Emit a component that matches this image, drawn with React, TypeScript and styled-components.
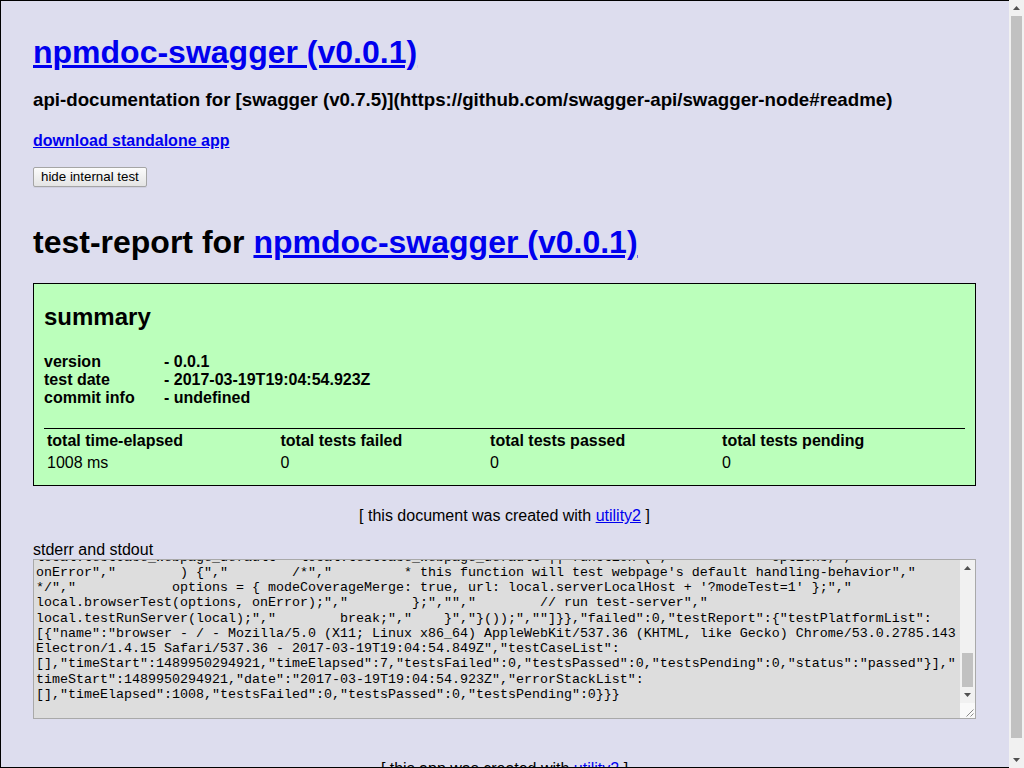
import React, { useEffect, useRef, useState } from 'react';
import styled, { createGlobalStyle } from 'styled-components';

const GlobalStyle = createGlobalStyle`
  html {
    background: #dde;
  }
  body {
    margin: 0;
    background: #dde;
    color: #000;
    font-family: "Liberation Sans", Arial, Helvetica, sans-serif;
  }
  a {
    color: #00e;
  }
`;

// window frame drawn over the page edges
const Frame = styled.div`
  position: fixed;
  top: 0;
  left: 0;
  right: 15px;
  bottom: 0;
  border: 1px solid #000;
  border-right: 0;
  pointer-events: none;
`;

const Page = styled.div`
  padding: 12px 48px 5px 33px;
`;

const Title = styled.h1<{ $top: number; $bottom: number }>`
  font-size: 32px;
  font-weight: bold;
  margin: ${(p) => p.$top}px 0 ${(p) => p.$bottom}px;
`;

const Subtitle = styled.h3`
  font-size: 18.72px;
  margin: 0 0 20.7px;
`;

const DownloadHeading = styled.h4`
  font-size: 16px;
  margin: 0 0 17.6px;
`;

const Toolbar = styled.div`
  display: flex;
`;

const ToggleButton = styled.button`
  box-sizing: border-box;
  height: 20px;
  padding: 0 7px;
  font-family: "Liberation Sans", Arial, sans-serif;
  font-size: 13.333px;
  line-height: 18px;
  color: #000;
  background: linear-gradient(#fcfcfc, #e4e4e4);
  border: 1px solid #a5a5a5;
  border-radius: 2px;
  box-shadow: 0 1px 0 rgba(0, 0, 0, 0.06);
`;

const SummaryBox = styled.div`
  background: #bfb;
  border: 1px solid #000;
  padding: 0 10px 10px 10px;
`;

const SummaryHeading = styled.h2`
  font-size: 24px;
  margin: 18.9px 0 21.5px;
`;

const InfoGrid = styled.div`
  display: grid;
  grid-template-columns: 120px auto;
  font-size: 16px;
  font-weight: bold;
`;

const TotalsTable = styled.table`
  width: 100%;
  margin-top: 21px;
  border-top: 1px solid #000;
  border-spacing: 2px;
  text-align: left;
  font-size: 16px;

  th,
  td {
    padding: 1px;
  }
`;

const Footer = styled.div<{ $top: number }>`
  margin-top: ${(p) => p.$top}px;
  text-align: center;
  font-size: 16px;
`;

const LogLabel = styled.div`
  margin-top: 15.6px;
  font-size: 16px;
`;

const LogWrap = styled.div`
  position: relative;
`;

const LogArea = styled.textarea`
  display: block;
  box-sizing: border-box;
  width: 100%;
  height: 160px;
  margin: 0;
  padding: 2px 17px 0 2px;
  background: #ddd;
  color: #000;
  border: 1px solid #a9a9a9;
  font-family: "Liberation Mono", "Courier New", monospace;
  font-size: 13.333px;
  line-height: 15.25px;
  white-space: pre;
  overflow: hidden;
  resize: none;
`;

/* scrollbar drawings (the browser hides its own) */
const ScrollColumn = styled.div<{ $page?: boolean }>`
  position: ${(p) => (p.$page ? 'fixed' : 'absolute')};
  top: ${(p) => (p.$page ? 0 : 1)}px;
  right: ${(p) => (p.$page ? 0 : 1)}px;
  bottom: ${(p) => (p.$page ? 0 : 16)}px;
  width: 15px;
  display: flex;
  flex-direction: column;
  background: #f1f1f1;
`;

const ArrowButton = styled.div`
  height: 16px;
  flex: none;
  display: flex;
  align-items: center;
  justify-content: center;
`;

const Track = styled.div`
  flex: 1;
  position: relative;
`;

const Thumb = styled.div`
  position: absolute;
  left: 2px;
  right: 2px;
  background: #c1c1c1;
`;

const Corner = styled.div`
  position: absolute;
  right: 1px;
  bottom: 1px;
  width: 15px;
  height: 15px;
  background: #f9f9f9;
  display: flex;
`;

function Arrow({ down }: { down?: boolean }) {
  return (
    <svg width="7" height="4" viewBox="0 0 7 4">
      <polygon points={down ? '0,0 7,0 3.5,4' : '0,4 7,4 3.5,0'} fill="#505050" />
    </svg>
  );
}

function Scrollbar({
  page,
  thumb,
  trackRef,
}: {
  page?: boolean;
  thumb: { top: number; height: number };
  trackRef?: React.Ref<HTMLDivElement>;
}) {
  return (
    <ScrollColumn $page={page}>
      <ArrowButton>
        <Arrow />
      </ArrowButton>
      <Track ref={trackRef}>
        <Thumb style={{ top: thumb.top, height: thumb.height }} />
      </Track>
      <ArrowButton>
        <Arrow down />
      </ArrowButton>
    </ScrollColumn>
  );
}

const info = [
  ['version', '- 0.0.1'],
  ['test date', '- 2017-03-19T19:04:54.923Z'],
  ['commit info', '- undefined'],
];

const totals = [
  ['total time-elapsed', '1008 ms'],
  ['total tests failed', '0'],
  ['total tests passed', '0'],
  ['total tests pending', '0'],
];

const earlierLines = [
  '',
  '  npmdoc-swagger',
  '',
  '  api-documentation for  [swagger (v0.7.5)](https://github.com/swagger-api/swagger-node#readme)',
  '',
  '  [build] starting test-report ...',
  '  [build] browser - electron - http://127.0.0.1:8081/?modeTest=1',
  '',
  '  [MODE_BUILD=testReportCreate] - 2017-03-19T19:04:53.911Z - (ts=1489950293911)',
  '',
  'browserTest - electron.spawn - /npmdoc-swagger/node_modules/electron-lite/external/electron',
  'browserTest - electron.BrowserWindow.loadURL - http://127.0.0.1:8081/?modeTest=1',
  '',
  '  browser - http://127.0.0.1:8081/?modeTest=1 - testRun - 1 tests pending ...',
  '  browser - http://127.0.0.1:8081/?modeTest=1 - testRun - all tests passed',
  '',
  'browserTest - globalThis.utility2_testReport',
  '{"testPlatformList":[{"name":"node - linux","screenCapture":"","testCaseList":[{"name":"local.testCase_webpage_',
  'default","status":"passed","timeElapsed":1002,"source":["    local.testCase_webpage_default = function (","',
  '        options,","        onError","    ) {","        local.testMock([","            [local, { exit: local.nop }]","',
  '        ], function (onError) {","            local.browserTest({ url: local.serverLocalHost }, onError);","',
  '        }, onError);","    };","","    switch (local.modeJs) {","","    // run browser js-env code - post-init","',
  '    case \'browser\':","        break;","","    // run node js-env code - post-init","    case \'node\':","',
];

const logLines = [
  ...earlierLines,
  'local.testCase_webpage_default = local.testCase_webpage_default || function (","            options,","',
  'onError","        ) {","        /*","         * this function will test webpage\'s default handling-behavior","',
  '*/","            options = { modeCoverageMerge: true, url: local.serverLocalHost + \'?modeTest=1\' };","',
  'local.browserTest(options, onError);","        };","","        // run test-server","',
  'local.testRunServer(local);","        break;","    }","}());",""]}},"failed":0,"testReport":{"testPlatformList":',
  '[{"name":"browser - / - Mozilla/5.0 (X11; Linux x86_64) AppleWebKit/537.36 (KHTML, like Gecko) Chrome/53.0.2785.143',
  'Electron/1.4.15 Safari/537.36 - 2017-03-19T19:04:54.849Z","testCaseList":',
  '[],"timeStart":1489950294921,"timeElapsed":7,"testsFailed":0,"testsPassed":0,"testsPending":0,"status":"passed"}],"',
  'timeStart":1489950294921,"date":"2017-03-19T19:04:54.923Z","errorStackList":',
  '[],"timeElapsed":1008,"testsFailed":0,"testsPassed":0,"testsPending":0}}}',
  '',
];

type ThumbBox = { top: number; height: number };

function thumbFor(trackH: number, clientH: number, scrollH: number, scrollTop: number): ThumbBox {
  const height = Math.max(Math.round((trackH * clientH) / scrollH), 15);
  const range = scrollH - clientH;
  const top = range > 0 ? Math.round(((trackH - height) * scrollTop) / range) : 0;
  return { top, height };
}

export default function App() {
  const logRef = useRef<HTMLTextAreaElement>(null);
  const logTrackRef = useRef<HTMLDivElement>(null);
  const [logThumb, setLogThumb] = useState<ThumbBox>({ top: 0, height: 0 });
  const [pageThumb, setPageThumb] = useState<ThumbBox>({ top: 0, height: 0 });

  useEffect(() => {
    const el = logRef.current;
    const track = logTrackRef.current;
    if (el && track) {
      el.scrollTop = el.scrollHeight;
      setLogThumb(thumbFor(track.clientHeight, el.clientHeight, el.scrollHeight, el.scrollTop));
    }
    const doc = document.documentElement;
    setPageThumb(thumbFor(window.innerHeight - 32, window.innerHeight, doc.scrollHeight, window.scrollY));
  }, []);

  return (
    <>
      <GlobalStyle />
      <Page>
        <Title $top={21.5} $bottom={18.5}>
          <a href="#">npmdoc-swagger (v0.0.1)</a>
        </Title>
        <Subtitle>
          api-documentation for [swagger (v0.7.5)](https://github.com/swagger-api/swagger-node#readme)
        </Subtitle>
        <DownloadHeading>
          <a href="#">download standalone app</a>
        </DownloadHeading>
        <Toolbar>
          <ToggleButton>hide internal test</ToggleButton>
        </Toolbar>
        <Title $top={36.5} $bottom={22.7}>
          test-report for <a href="#">npmdoc-swagger (v0.0.1)</a>
        </Title>
        <SummaryBox>
          <SummaryHeading>summary</SummaryHeading>
          <InfoGrid>
            {info.map(([k, v]) => (
              <React.Fragment key={k}>
                <span>{k}</span>
                <span>{v}</span>
              </React.Fragment>
            ))}
          </InfoGrid>
          <TotalsTable>
            <thead>
              <tr>
                {totals.map(([k]) => (
                  <th key={k}>{k}</th>
                ))}
              </tr>
            </thead>
            <tbody>
              <tr>
                {totals.map(([k, v]) => (
                  <td key={k}>{v}</td>
                ))}
              </tr>
            </tbody>
          </TotalsTable>
        </SummaryBox>
        <Footer $top={21.4}>
          [ this document was created with <a href="#">utility2</a> ]
        </Footer>
        <LogLabel>stderr and stdout</LogLabel>
        <LogWrap>
          <LogArea ref={logRef} readOnly value={logLines.join('\n')} />
          <Scrollbar thumb={logThumb} trackRef={logTrackRef} />
          <Corner>
            <svg width="15" height="15" viewBox="0 0 15 15">
              <path d="M13.5 6.5 L6.5 13.5 M13.5 10.5 L10.5 13.5" stroke="#8a8a8a" strokeWidth="1" />
            </svg>
          </Corner>
        </LogWrap>
        <Footer $top={41.3}>
          [ this app was created with <a href="#">utility2</a> ]
        </Footer>
      </Page>
      <Frame />
      <Scrollbar page thumb={pageThumb} />
    </>
  );
}
